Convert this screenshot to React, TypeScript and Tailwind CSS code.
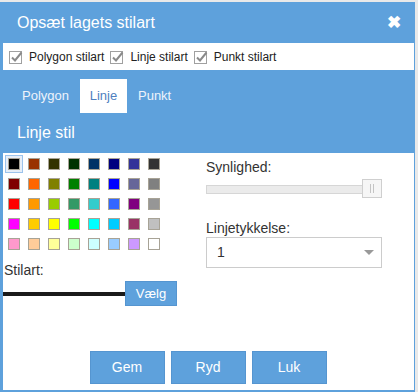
import React from "react";

const colors = [
  ["#000000", "#993300", "#333300", "#003300", "#003366", "#000080", "#333399", "#333333"],
  ["#800000", "#ff6600", "#808000", "#008000", "#008080", "#0000ff", "#666699", "#808080"],
  ["#ff0000", "#ff9900", "#99cc00", "#339966", "#33cccc", "#3366ff", "#800080", "#969696"],
  ["#ff00ff", "#ffcc00", "#ffff00", "#00ff00", "#00ffff", "#00ccff", "#993366", "#c0c0c0"],
  ["#ff99cc", "#ffcc99", "#ffff99", "#ccffcc", "#ccffff", "#99ccff", "#cc99ff", "#ffffff"],
];

function Check() {
  return (
    <svg width="14" height="14" viewBox="0 0 14 14" className="shrink-0">
      <rect x="0.5" y="1.5" width="12" height="12" fill="#fff" stroke="#a0a0a0" />
      <path d="M3 7.5 L6 10.5 L12.5 2.5" fill="none" stroke="#8a8a8a" strokeWidth="2" />
    </svg>
  );
}

export default function App() {
  return (
    <div className="w-[418px] h-[392px] bg-[#e9e9e9] pt-[2px]" style={{ fontFamily: '"Liberation Sans", Arial, sans-serif' }}>
      <div className="w-[415px] h-[390px] bg-[#5ea1dc] flex flex-col pl-[3px] pr-[1px] pb-[2px]">
        <div className="h-[41px] flex items-center justify-between pl-[14px] pr-[13px]">
          <span className="text-[16px] text-white">Opsæt lagets stilart</span>
          <span className="text-white text-[17px] font-bold leading-none">✖</span>
        </div>
        <div className="h-[27px] bg-white flex items-center pl-[6px] text-[12px] text-[#222]">
          <Check /><span className="ml-[6px] mr-[6px]">Polygon stilart</span>
          <Check /><span className="ml-[6px] mr-[6px]">Linje stilart</span>
          <Check /><span className="ml-[6px]">Punkt stilart</span>
        </div>
        <div className="h-[43px] flex items-end pl-[8px]">
          <div className="h-[34px] px-[11px] flex items-center text-[13px] text-[#eef3fb]">Polygon</div>
          <div className="h-[34px] w-[47px] bg-white flex items-center justify-center text-[13px] text-[#4f7fbf]">Linje</div>
          <div className="h-[34px] px-[11px] flex items-center text-[13px] text-[#eef3fb]">Punkt</div>
        </div>
        <div className="h-[40px] flex items-center pl-[14px] text-[16px] text-white">Linje stil</div>
        <div className="flex-1 bg-white flex flex-col">
          <div className="flex">
            <div className="w-[203px]">
              <div className="grid grid-cols-[repeat(8,20px)] grid-rows-[repeat(5,20px)] pl-[1px] pt-[1px]">
                {colors.flat().map((c, i) => (
                  <div key={i} className="w-[20px] h-[20px] flex items-center justify-center">
                    <div className={`w-[18px] h-[18px] flex items-center justify-center ${i === 0 ? "border border-[#9cc3ec] bg-[#e6eef8]" : ""}`}>
                      <div className="w-[12px] h-[12px] border border-[#a8a396]" style={{ backgroundColor: c }} />
                    </div>
                  </div>
                ))}
              </div>
              <div className="mt-[8px] pl-[1px] text-[14px] leading-[16px] text-[#333]">Stilart:</div>
              <div className="flex items-center mt-[3px]">
                <div className="w-[122px] h-[4px] bg-[#1a1a1a]" />
                <div className="w-[52px] h-[25px] bg-[#5ea1dc] border border-[#5595d0] text-white text-[13px] flex items-center justify-center">Vælg</div>
              </div>
            </div>
            <div className="pt-[5px]">
              <div className="text-[14px] leading-[18px] text-[#333]">Synlighed:</div>
              <div className="relative mt-[3px] w-[176px] h-[19px]">
                <div className="absolute left-0 top-[6px] w-[176px] h-[9px] bg-[#ebebeb] border border-[#d6d6d6]" />
                <div className="absolute right-0 top-0 w-[20px] h-[19px] bg-[#f6f6f6] border border-[#cfcfcf] flex items-center justify-center gap-[2px]">
                  <div className="w-[1px] h-[9px] bg-[#c4c4c4]" />
                  <div className="w-[1px] h-[9px] bg-[#c4c4c4]" />
                </div>
              </div>
              <div className="mt-[21px] text-[14px] leading-[18px] text-[#333]">Linjetykkelse:</div>
              <div className="w-[176px] h-[31px] border border-[#cccccc] flex items-center justify-between pl-[10px] pr-[7px] text-[14px] text-[#333]">
                <span>1</span>
                <svg width="10" height="6" viewBox="0 0 10 6"><path d="M0 0 L10 0 L5 5 Z" fill="#999" /></svg>
              </div>
            </div>
          </div>
          <div className="flex-1" />
          <div className="flex justify-center gap-[6px] pb-[6px] pr-[1px]">
            {["Gem", "Ryd", "Luk"].map((t) => (
              <div key={t} className="w-[75px] h-[33px] bg-[#5ea1dc] border border-[#5595d0] text-white text-[14px] flex items-center justify-center">{t}</div>
            ))}
          </div>
        </div>
      </div>
    </div>
  );
}
